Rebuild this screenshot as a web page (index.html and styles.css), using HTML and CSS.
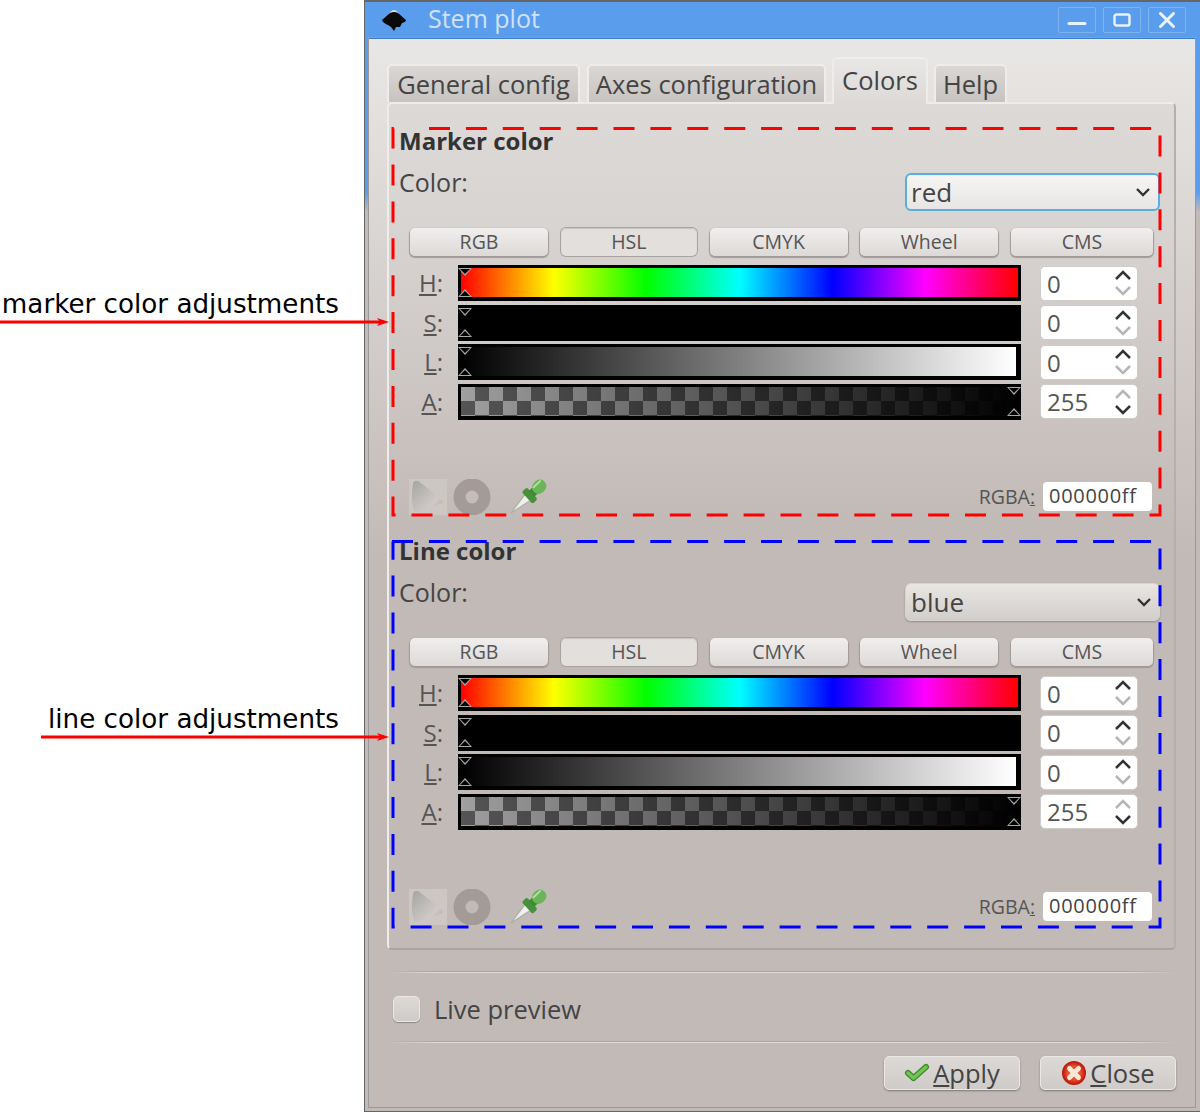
FILE: index.html
```html
<!DOCTYPE html>
<html lang="en">
<head>
  <meta charset="UTF-8" />
  <title>Stem plot</title>
  <link rel="stylesheet" href="styles.css">
</head>
<body>
  <div class="page">
    <aside class="notes">
      <p class="note note-marker">marker color adjustments</p>
      <p class="note note-line">line color adjustments</p>
    </aside>

    <div class="window">
      <header class="titlebar">
        <svg class="app-logo" width="26" height="24" viewBox="0 0 26 24">
          <path d="M8 7 Q13 -1 18 7 Z" fill="#ddd"/>
          <path d="M9 6 Q13 4 17 6 L25 13 Q25 15 21 16 L19 20 L15 20 L13 24 L10 20 L7 18 Q2 16 1 13 Z" fill="#0a0a0a"/>
        </svg>
        <h1 class="win-title">Stem plot</h1>
        <div class="win-btns">
          <button class="win-btn"><svg width="20" height="14" viewBox="0 0 20 14"><path d="M2 10.5h16" stroke="#eaf2fd" stroke-width="3" stroke-linecap="round"/></svg></button>
          <button class="win-btn"><svg width="20" height="14" viewBox="0 0 20 14"><rect x="2.5" y="1.5" width="15" height="11" rx="2" fill="none" stroke="#eaf2fd" stroke-width="2.4"/></svg></button>
          <button class="win-btn"><svg width="20" height="16" viewBox="0 0 20 16"><path d="M3.5 1.5 L16.5 14.5 M16.5 1.5 L3.5 14.5" stroke="#eaf2fd" stroke-width="3" stroke-linecap="round"/></svg></button>
        </div>
      </header>

      <div class="dialog">
        <nav class="tabs">
          <div class="tab tab-general">General config</div>
          <div class="tab tab-axes">Axes configuration</div>
          <div class="tab tab-colors active">Colors</div>
          <div class="tab tab-help">Help</div>
        </nav>

        <main class="pane">
          <section class="color-box">
            <h2 class="box-title">Marker color</h2>
            <div class="color-row">
              <span class="color-label">Color:</span>
              <div class="combo focus"><span>red</span><svg class="chev" width="16" height="10" viewBox="0 0 16 10"><path d="M2 2 L8 8 L14 2" fill="none" stroke="#333" stroke-width="2.4"/></svg></div>
            </div>
            <div class="modes">
              <div class="mode">RGB</div>
              <div class="mode active">HSL</div>
              <div class="mode">CMYK</div>
              <div class="mode">Wheel</div>
              <div class="mode">CMS</div>
            </div>
            <div class="sliders">
              <label class="s-label"><u>H</u>:</label>
              <div class="bar bar-h"><i class="tick top"></i><i class="tick bottom"></i></div>
              <div class="spin"><span>0</span><div class="arrows"><svg width="20" height="28" viewBox="0 0 20 28"><path d="M3 10 L10 3 L17 10" class="on"/><path d="M3 18 L10 25 L17 18" class="off"/></svg></div></div>

              <label class="s-label"><u>S</u>:</label>
              <div class="bar bar-s"><i class="tick top"></i><i class="tick bottom"></i></div>
              <div class="spin"><span>0</span><div class="arrows"><svg width="20" height="28" viewBox="0 0 20 28"><path d="M3 10 L10 3 L17 10" class="on"/><path d="M3 18 L10 25 L17 18" class="off"/></svg></div></div>

              <label class="s-label"><u>L</u>:</label>
              <div class="bar bar-l"><i class="tick top"></i><i class="tick bottom"></i></div>
              <div class="spin"><span>0</span><div class="arrows"><svg width="20" height="28" viewBox="0 0 20 28"><path d="M3 10 L10 3 L17 10" class="on"/><path d="M3 18 L10 25 L17 18" class="off"/></svg></div></div>

              <label class="s-label"><u>A</u>:</label>
              <div class="bar bar-a"><i class="tick top end"></i><i class="tick bottom end"></i></div>
              <div class="spin"><span>255</span><div class="arrows"><svg width="20" height="28" viewBox="0 0 20 28"><path d="M3 10 L10 3 L17 10" class="off"/><path d="M3 18 L10 25 L17 18" class="on"/></svg></div></div>
            </div>
            <div class="picker-row">
              <div class="tool tool-tri"><svg width="37" height="35" viewBox="0 0 37 35"><defs><linearGradient id="tri1" x1="0" y1="0" x2="1" y2="1"><stop offset="0" stop-color="#a3a69f"/><stop offset="0.7" stop-color="#d0c8ca"/><stop offset="1" stop-color="#a8a2a0"/></linearGradient></defs><path d="M6 2 Q9 1 12 4 L33 21 Q35 23 33 24 L10 33 Q5 34 4 29 Q2 16 4 5 Q4 3 6 2 Z" fill="url(#tri1)"/></svg></div>
              <div class="tool"><svg width="38" height="36" viewBox="0 0 38 36"><circle cx="19" cy="18" r="12.5" fill="none" stroke="#a49a98" stroke-width="12"/></svg></div>
              <div class="tool tool-drop"><svg width="37" height="36" viewBox="0 0 37 36"><g transform="translate(1 34) rotate(-43)"><path d="M0 0 L23 -4 L23 4 Z" fill="#eef0ec" stroke="#a9aba6"/><rect x="22" y="-8" width="7" height="16" rx="2" fill="#47913a"/><rect x="28" y="-4" width="5" height="8" fill="#3f8a33"/><rect x="31" y="-6.5" width="15" height="13" rx="6.5" fill="#6cb558"/><path d="M34 -3.5 H43" stroke="#b3dea0" stroke-width="2" stroke-linecap="round"/></g></svg></div>
              <label class="rgba-label">RGBA<u>:</u></label>
              <div class="rgba-input">000000ff</div>
            </div>
          </section>

          <section class="color-box last">
            <h2 class="box-title">Line color</h2>
            <div class="color-row">
              <span class="color-label">Color:</span>
              <div class="combo"><span>blue</span><svg class="chev" width="16" height="10" viewBox="0 0 16 10"><path d="M2 2 L8 8 L14 2" fill="none" stroke="#333" stroke-width="2.4"/></svg></div>
            </div>
            <div class="modes">
              <div class="mode">RGB</div>
              <div class="mode active">HSL</div>
              <div class="mode">CMYK</div>
              <div class="mode">Wheel</div>
              <div class="mode">CMS</div>
            </div>
            <div class="sliders">
              <label class="s-label"><u>H</u>:</label>
              <div class="bar bar-h"><i class="tick top"></i><i class="tick bottom"></i></div>
              <div class="spin"><span>0</span><div class="arrows"><svg width="20" height="28" viewBox="0 0 20 28"><path d="M3 10 L10 3 L17 10" class="on"/><path d="M3 18 L10 25 L17 18" class="off"/></svg></div></div>

              <label class="s-label"><u>S</u>:</label>
              <div class="bar bar-s"><i class="tick top"></i><i class="tick bottom"></i></div>
              <div class="spin"><span>0</span><div class="arrows"><svg width="20" height="28" viewBox="0 0 20 28"><path d="M3 10 L10 3 L17 10" class="on"/><path d="M3 18 L10 25 L17 18" class="off"/></svg></div></div>

              <label class="s-label"><u>L</u>:</label>
              <div class="bar bar-l"><i class="tick top"></i><i class="tick bottom"></i></div>
              <div class="spin"><span>0</span><div class="arrows"><svg width="20" height="28" viewBox="0 0 20 28"><path d="M3 10 L10 3 L17 10" class="on"/><path d="M3 18 L10 25 L17 18" class="off"/></svg></div></div>

              <label class="s-label"><u>A</u>:</label>
              <div class="bar bar-a"><i class="tick top end"></i><i class="tick bottom end"></i></div>
              <div class="spin"><span>255</span><div class="arrows"><svg width="20" height="28" viewBox="0 0 20 28"><path d="M3 10 L10 3 L17 10" class="off"/><path d="M3 18 L10 25 L17 18" class="on"/></svg></div></div>
            </div>
            <div class="picker-row">
              <div class="tool tool-tri"><svg width="37" height="35" viewBox="0 0 37 35"><path d="M6 2 Q9 1 12 4 L33 21 Q35 23 33 24 L10 33 Q5 34 4 29 Q2 16 4 5 Q4 3 6 2 Z" fill="url(#tri1)"/></svg></div>
              <div class="tool"><svg width="38" height="36" viewBox="0 0 38 36"><circle cx="19" cy="18" r="12.5" fill="none" stroke="#a49a98" stroke-width="12"/></svg></div>
              <div class="tool tool-drop"><svg width="37" height="36" viewBox="0 0 37 36"><g transform="translate(1 34) rotate(-43)"><path d="M0 0 L23 -4 L23 4 Z" fill="#eef0ec" stroke="#a9aba6"/><rect x="22" y="-8" width="7" height="16" rx="2" fill="#47913a"/><rect x="28" y="-4" width="5" height="8" fill="#3f8a33"/><rect x="31" y="-6.5" width="15" height="13" rx="6.5" fill="#6cb558"/><path d="M34 -3.5 H43" stroke="#b3dea0" stroke-width="2" stroke-linecap="round"/></g></svg></div>
              <label class="rgba-label">RGBA<u>:</u></label>
              <div class="rgba-input">000000ff</div>
            </div>
          </section>
        </main>

        <hr class="sep sep-top">
        <div class="preview-row">
          <span class="check"></span>
          <span class="check-label">Live preview</span>
        </div>
        <hr class="sep">
        <footer class="actions">
          <button class="action">
            <svg width="26" height="20" viewBox="0 0 26 20"><path d="M4 10 L9.500 15 L22 4" fill="none" stroke="#3c8a2a" stroke-width="6" stroke-linecap="round" stroke-linejoin="round"/><path d="M4 10 L9.500 15 L22 4" fill="none" stroke="#72c455" stroke-width="3.500" stroke-linecap="round" stroke-linejoin="round"/></svg>
            <span><u>A</u>pply</span>
          </button>
          <button class="action">
            <svg width="26" height="26" viewBox="0 0 26 26"><defs><radialGradient id="stop1"><stop offset="0.55" stop-color="#e8502f"/><stop offset="1" stop-color="#b81208"/></radialGradient></defs><circle cx="13" cy="13" r="12" fill="url(#stop1)"/><path d="M8.500 8.500 L17.500 17.500 M17.500 8.500 L8.500 17.500" stroke="#f8e8d4" stroke-width="5" stroke-linecap="round"/></svg>
            <span><u>C</u>lose</span>
          </button>
        </footer>
      </div>
    </div>

    <!-- annotations drawn on top of the screenshot -->
    <svg class="overlay" width="1200" height="1112" viewBox="0 0 1200 1112">
      <path d="M429 128.500 H1160 V515 H393 V128.500 H404" fill="none" stroke="#f00" stroke-width="3" stroke-dasharray="21 15.900"/>
      <path d="M392 541.500 H1160 V927 H393 V541.500" fill="none" stroke="#00f" stroke-width="3" stroke-dasharray="21 15.900"/>
      <path d="M0 322 H384" stroke="#f00" stroke-width="3"/>
      <path d="M377 318 L389 322 L377 326 L380 322 Z" fill="#f00"/>
      <path d="M41 737 H384" stroke="#f00" stroke-width="3"/>
      <path d="M377 733 L389 737 L377 741 L380 737 Z" fill="#f00"/>
    </svg>
  </div>
</body>
</html>
```

FILE: styles.css
```css
* {
  box-sizing: border-box;
}

html, body {
  margin: 0;
  height: 100%;
  background: white;
}

body {
  font-family: 'Open Sans', 'Noto Sans', sans-serif;
  color: #444;
  overflow: hidden;
}

.page {
  position: relative;
  display: flex;
  width: 1200px;
  height: 1112px;
}

.overlay {
  position: absolute;
  left: 0;
  top: 0;
  pointer-events: none;
}

/* left hand notes */
.notes {
  width: 364px;
  flex: none;
  padding-top: 288px;
  text-align: right;
}

.note {
  margin: 0;
  padding-right: 25px;
  font-family: 'DejaVu Sans', sans-serif;
  font-size: 26.2px;
  line-height: 32px;
  white-space: nowrap;
  color: #000;
}

.note-line {
  margin-top: 383px;
}

/* window frame */
.window {
  flex: 1;
  display: flex;
  flex-direction: column;
  border-left: 1px solid #666;
  border-top: 2px solid #666;
  border-bottom: 1px solid #666;
  background: linear-gradient(to bottom, #5b9ded 0, #5b9ded 190px, #c2bab7 210px);
  padding: 0 5px 4px 4px;
}

.titlebar {
  display: flex;
  align-items: center;
  height: 36px;
  flex: none;
  padding-right: 9px;
}

.app-logo {
  margin-left: 12px;
  margin-bottom: 2px;
  flex: none;
}

.win-title {
  margin: 0 0 4px 21px;
  font-size: 25px;
  font-weight: 400;
  color: #cfe2fa;
}

.win-btns {
  margin-left: auto;
  display: flex;
  gap: 7px;
}

.win-btn {
  width: 38px;
  height: 26px;
  padding: 0;
  display: flex;
  align-items: center;
  justify-content: center;
  background: #5b9ded;
  border: 1px solid #7eb3f0;
  border-radius: 2px;
}

.dialog {
  flex: 1;
  display: flex;
  flex-direction: column;
  padding: 18px 19px 0 18px;
  border-top: 1px solid #3f7fc9;
  background: linear-gradient(to bottom, #e9e7e5 0, #d9d5d3 200px, #c2bab7 520px);
  box-shadow: 0 0 0 1px #999;
}

/* tabs */
.tabs {
  display: flex;
  align-items: flex-end;
  height: 45px;
  flex: none;
  gap: 6px;
}

.tab {
  height: 38px;
  padding-top: 2px;
  text-align: center;
  font-size: 25.5px;
  line-height: 32px;
  white-space: nowrap;
  background: linear-gradient(to bottom, #dad7d5, #c8c3c1);
  border: 2px solid #efedeb;
  border-bottom: none;
  border-radius: 5px 5px 0 0;
}

.tab-general { width: 193px; }
.tab-axes { width: 239px; margin-left: 1px; }
.tab-colors { width: 96px; }
.tab-help { width: 73px; }

.tab.active {
  position: relative;
  z-index: 1;
  height: 47px;
  margin-bottom: -2px;
  padding-top: 5px;
  background: linear-gradient(to bottom, #e9e7e5, #dcd9d7);
}

.pane {
  flex: none;
  padding: 25px 15px 24px 10px;
  border: 2px solid #efedeb;
  border-right-color: #b5b0ae;
  border-bottom-color: #a9a3a1;
  border-radius: 5px;
  background: linear-gradient(to bottom, #dcd9d7 0, #d8d4d2 120px, #c2bab7 420px);
}

.color-box {
  display: flex;
  flex-direction: column;
  height: 385px;
  margin-bottom: 25px;
}

.color-box.last {
  margin-bottom: 0;
}

.box-title {
  margin: 0;
  font-size: 24px;
  line-height: 24px;
  font-weight: 700;
  color: #333;
}

.color-row {
  display: flex;
  justify-content: space-between;
  margin-top: 20px;
  height: 38px;
}

.color-label {
  font-size: 25px;
  line-height: 18px;
}

.combo {
  width: 255px;
  margin-right: -1px;
  display: flex;
  align-items: center;
  justify-content: space-between;
  padding: 0 7px 0 5px;
  font-size: 26px;
  background: linear-gradient(to bottom, #e8e5e3, #d2cecb);
  border: 1px solid #d8d4d2;
  border-radius: 6px;
  box-shadow: 0 1px 2px #8f8987;
}

.combo.focus {
  border: 2px solid #58aee0;
  padding-left: 4px;
  background: linear-gradient(to bottom, #f6f5f4, #e8e6e5);
  box-shadow: none;
}

.modes {
  display: grid;
  grid-template-columns: 138px 136px 138px 138px 142px;
  column-gap: 12.75px;
  margin-top: 17px;
  padding-left: 11px;
}

.mode {
  height: 28px;
  text-align: center;
  font-size: 19.5px;
  line-height: 27px;
  color: #555;
  background: linear-gradient(to bottom, #f1efee, #dcd9d7);
  border-radius: 5px;
  box-shadow: 0 1px 1px 1px #a09a98;
}

.mode.active {
  background: #e2dfdd;
  box-shadow: 0 0 0 1px #a8a3a1, inset 0 1px 1px #c8c4c2;
}

.sliders {
  display: grid;
  grid-template-columns: 44px 563px 102px;
  grid-auto-rows: 36px;
  column-gap: 15px;
  row-gap: 3.67px;
  margin-top: 9px;
  align-items: center;
}

.s-label {
  text-align: right;
  font-size: 24px;
  line-height: 30px;
  color: #555;
}

.bar {
  position: relative;
  height: 100%;
  border: 3px solid #000;
  border-bottom-width: 4px;
  background: #000;
}

.bar-h {
  background: linear-gradient(to right, #f00, #ff0 16.66%, #0f0 33.33%, #0ff 50%, #00f 66.66%, #f0f 83.33%, #f00);
}

.bar-l {
  border-right-width: 5px;
  background: linear-gradient(to right, #000, #fff);
}

.bar-a {
  background:
    linear-gradient(to right, rgba(0,0,0,0) 0, #000 100%),
    conic-gradient(#555 25%, #a0a0a0 0 50%, #555 0 75%, #a0a0a0 0) 0 0 / 28px 28px;
}

/* the little slider handles, a grey triangle with a black one inside */
.tick {
  position: absolute;
  left: -3px;
  width: 0;
  height: 0;
  border-left: 7px solid transparent;
  border-right: 7px solid transparent;
}

.tick::before {
  content: "";
  position: absolute;
  left: -5px;
  width: 0;
  height: 0;
  border-left: 5px solid transparent;
  border-right: 5px solid transparent;
}

.tick.top {
  top: 0;
  border-top: 8px solid #a8a8a8;
}

.tick.top::before {
  top: -7px;
  border-top: 5px solid #000;
}

.tick.bottom {
  bottom: 0;
  border-bottom: 8px solid #a8a8a8;
}

.tick.bottom::before {
  bottom: -7px;
  border-bottom: 5px solid #000;
}

.tick.end {
  left: auto;
  right: -3px;
}

.spin {
  height: 35px;
  margin-left: 4px;
  display: flex;
  align-items: center;
  justify-content: space-between;
  padding: 0 4px 0 6px;
  font-size: 24px;
  color: #555;
  background: #fff;
  border: 1px solid #cfcbc9;
  border-radius: 5px;
}

.arrows svg {
  display: block;
}

.arrows path {
  fill: none;
  stroke-width: 2.5;
}

.arrows .on {
  stroke: #333;
}

.arrows .off {
  stroke: #b5b5b5;
}

.picker-row {
  margin-top: auto;
  display: flex;
  align-items: center;
  height: 35px;
  padding-left: 10px;
}

.tool {
  width: 38px;
  height: 36px;
  flex: none;
  margin-right: 6px;
}

.tool-tri {
  background: #cdc7c4;
}

.tool-drop {
  margin-left: 13px;
}

.rgba-label {
  margin-left: auto;
  font-size: 19.5px;
  color: #555;
}

.rgba-input {
  width: 109px;
  height: 29px;
  margin: 0 7px 0 8px;
  padding-left: 6px;
  font-size: 20px;
  line-height: 28px;
  letter-spacing: 0.7px;
  background: #fff;
  border-radius: 4px;
}

/* bottom of the dialog */
.sep {
  width: 100%;
  height: 2px;
  margin: 0;
  border: none;
  background:
    linear-gradient(to right, transparent, #aca5a3 6%, #aca5a3 94%, transparent) top / 100% 1px no-repeat,
    linear-gradient(to right, transparent, #dedad8 6%, #dedad8 94%, transparent) bottom / 100% 1px no-repeat;
}

.sep-top {
  margin-top: 21px;
}

.preview-row {
  display: flex;
  align-items: center;
  height: 68px;
  padding: 3px 0 0 6px;
}

.check {
  width: 27px;
  height: 26px;
  background: linear-gradient(to bottom, #dcd9d7, #cfcbc8);
  border: 1px solid #ebe8e6;
  border-radius: 5px;
  box-shadow: 0 1px 1px #888;
}

.check-label {
  margin-left: 14px;
  font-size: 25.5px;
}

.actions {
  display: flex;
  justify-content: flex-end;
  gap: 20px;
  margin-top: 13px;
}

.action {
  width: 136px;
  height: 34px;
  display: flex;
  align-items: center;
  justify-content: center;
  gap: 3px;
  padding: 0;
  font-family: inherit;
  font-size: 25.5px;
  color: #444;
  background: linear-gradient(to bottom, #dcd9d7, #cfcbc8);
  border: 1px solid #ebe8e6;
  border-radius: 5px;
  box-shadow: 0 1px 2px #777;
}
```
